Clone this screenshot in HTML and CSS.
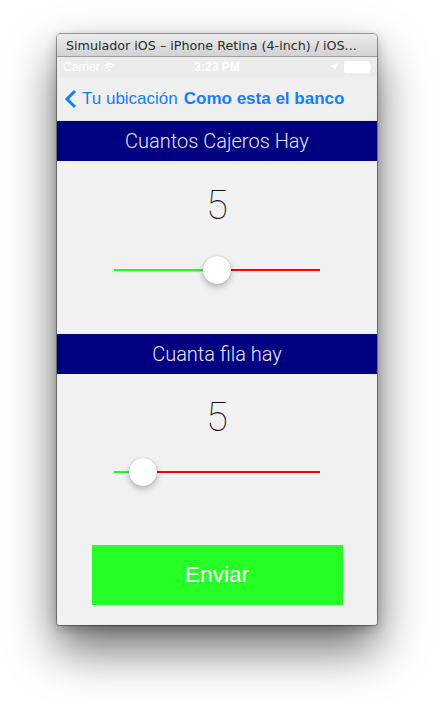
FILE: index.html
```html
<!DOCTYPE html>
<html lang="es">
<head>
<meta charset="utf-8">
<title>Simulador iOS</title>
<link rel="stylesheet" href="styles.css">
</head>
<body>
<div class="window">
  <div class="titlebar">Simulador iOS – iPhone Retina (4-inch) / iOS...</div>
  <div class="screen">
    <div class="statusbar">
      <div class="sb-left">
        <span>Carrier</span>
        <svg class="wifi" width="11" height="8" viewBox="0 0 11 8"><path d="M0.5 2.8 A7 7 0 0 1 10.5 2.8" fill="none" stroke="#fff" stroke-width="1.4"/><path d="M2.3 4.6 A4.4 4.4 0 0 1 8.7 4.6" fill="none" stroke="#fff" stroke-width="1.4"/><path d="M4 6.4 L5.5 7.9 L7 6.4 A2 2 0 0 0 4 6.4 Z" fill="#fff"/></svg>
      </div>
      <div class="sb-time">3:23 PM</div>
      <div class="sb-right">
        <svg width="8" height="8" viewBox="0 0 8 8"><path d="M8 0 L0 3.5 L4 4 L4.5 8 Z" fill="#fff"/></svg>
        <div class="battery"><div class="battery-fill"></div></div>
        <div class="battery-tip"></div>
      </div>
    </div>
    <div class="navbar">
      <svg class="chevron" width="13" height="20" viewBox="0 0 13 20"><polyline points="11,2 3,10 11,18" fill="none" stroke="#147efb" stroke-width="3"/></svg>
      <span class="back">Tu ubicación</span>
      <span class="navtitle">Como esta el banco</span>
    </div>
    <div class="header">Cuantos Cajeros Hay</div>
    <div class="block block-one">
      <div class="number">5</div>
      <div class="slider">
        <div class="track-on" style="width:50%"></div>
        <div class="track-off"></div>
        <div class="thumb" style="left:50%"></div>
      </div>
    </div>
    <div class="header">Cuanta fila hay</div>
    <div class="block block-two">
      <div class="number">5</div>
      <div class="slider">
        <div class="track-on" style="width:14%"></div>
        <div class="track-off"></div>
        <div class="thumb" style="left:14%"></div>
      </div>
    </div>
    <div class="actions">
      <button class="send">Enviar</button>
    </div>
  </div>
</div>
</body>
</html>
```
FILE: styles.css
```css
html, body {
  margin: 0;
  padding: 0;
  background: #ffffff;
}
body {
  width: 434px;
  height: 704px;
  overflow: hidden;
  padding-top: 34px;
  box-sizing: border-box;
}
.window {
  margin-left: 57px;
  width: 320px;
  display: flex;
  flex-direction: column;
  border-radius: 4px 4px 3px 3px;
  box-shadow: 0 0 0 1px rgba(0,0,0,0.35), 0 24px 48px rgba(0,0,0,0.58), 0 4px 12px rgba(0,0,0,0.25);
}
.titlebar {
  height: 23px;
  box-sizing: border-box;
  background: linear-gradient(#ececec, #d2d2d2);
  border-radius: 4px 4px 0 0;
  border-bottom: 1px solid #9c9c9c;
  font-family: "DejaVu Sans", sans-serif;
  font-size: 12.7px;
  color: #2a2a2a;
  line-height: 23px;
  padding-left: 9px;
  white-space: nowrap;
  overflow: hidden;
}
.screen {
  height: 568px;
  background: #f1f1f1;
  display: flex;
  flex-direction: column;
  border-radius: 0 0 3px 3px;
  overflow: hidden;
}
.statusbar {
  height: 20px;
  background: #ececed;
  display: flex;
  align-items: center;
  padding: 0 6px 0 6px;
  font-family: "Liberation Sans", Arial, sans-serif;
  font-size: 12px;
  color: #ffffff;
}
.sb-left {
  display: flex;
  align-items: center;
  gap: 4px;
  flex: 1;
}
.sb-time {
  font-weight: bold;
  font-size: 12px;
  flex: 0 0 auto;
}
.sb-right {
  flex: 1;
  display: flex;
  justify-content: flex-end;
  align-items: center;
  gap: 6px;
}
.battery {
  width: 22px;
  height: 8px;
  border: 1px solid #fff;
  border-radius: 2px;
  padding: 1px;
  box-sizing: content-box;
  background: #fff;
}
.battery-tip {
  width: 1.5px;
  height: 4px;
  background: #fff;
  margin-left: -6px;
}
.navbar {
  height: 44px;
  box-sizing: border-box;
  background: #efeff0;
  display: flex;
  align-items: center;
  padding-left: 7px;
  font-family: "Liberation Sans", Arial, sans-serif;
  font-size: 17px;
  color: #147efb;
  border-bottom: 1px solid #e3e3e3;
}
.chevron {
  margin-right: 5px;
}
.back {
  margin-right: 6px;
}
.navtitle {
  font-weight: bold;
}
.header {
  height: 40px;
  background: #000080;
  color: #e6e6f6;
  font-family: "Roboto", "Liberation Sans", sans-serif;
  font-weight: 300;
  font-size: 20px;
  line-height: 40px;
  text-align: center;
}
.block {
  display: flex;
  flex-direction: column;
  align-items: center;
}
.block-one {
  height: 173px;
}
.block-two {
  height: 171px;
}
.number {
  font-family: "Roboto", "Liberation Sans", sans-serif;
  font-weight: 100;
  font-size: 40px;
  line-height: 40px;
  color: #111111;
}
.block-one .number {
  margin-top: 25px;
}
.block-two .number {
  margin-top: 24px;
}
.slider {
  width: 206px;
  height: 2px;
  display: flex;
  position: relative;
}
.block-one .slider {
  margin-top: 43px;
}
.block-two .slider {
  margin-top: 33px;
}
.track-on {
  height: 2px;
  background: #18ff18;
}
.track-off {
  flex: 1;
  height: 2px;
  background: #ff0000;
}
.thumb {
  position: absolute;
  top: -13px;
  width: 28px;
  height: 28px;
  margin-left: -14px;
  border-radius: 50%;
  background: #ffffff;
  box-shadow: 0 3px 6px rgba(0,0,0,0.25), 0 0 1px rgba(0,0,0,0.35);
}
.actions {
  display: flex;
  justify-content: center;
}
.send {
  width: 251px;
  height: 60px;
  border: none;
  background: #26ff26;
  color: #ffffff;
  font-family: "Liberation Sans", Arial, sans-serif;
  font-size: 22.5px;
  padding: 0;
}
```
